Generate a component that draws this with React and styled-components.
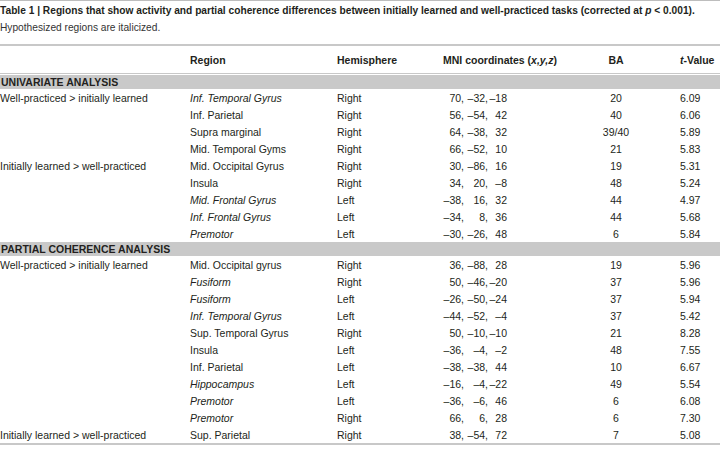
import React from "react";
import styled, { createGlobalStyle } from "styled-components";

const Global = createGlobalStyle`
  html, body { margin: 0; padding: 0; background: #fff; }
  body { font-family: "Liberation Sans", Arial, sans-serif; color: #231f20; }
`;

const Page = styled.div`
  width: 720px;
  height: 453px;
  overflow: hidden;
  border-top: 1px solid #bdbdbd;
  box-sizing: border-box;
`;

const Caption = styled.div`
  padding: 3px 0 0 0;
  height: 43px;
  box-sizing: border-box;
`;

const Title = styled.div`
  font-size: 10.2px;
  font-weight: bold;
  line-height: 13px;
  white-space: nowrap;
`;

const Sub = styled.div`
  font-size: 10.2px;
  line-height: 13px;
  margin-top: 4px;
  color: #333;
`;

const Table = styled.div`
  border-top: 2px solid #c8c8c8;
  border-bottom: 2px solid #c8c8c8;
`;

const Row = styled.div`
  display: grid;
  grid-template-columns: 190px 147px 106px 142px 62px 73px;
  align-items: center;
  height: ${(p) => (p.$head ? "27px" : "17px")};
  font-size: 10.5px;
  font-weight: ${(p) => (p.$head ? "bold" : "normal")};
  border-bottom: ${(p) => (p.$head ? "1px solid #c8c8c8" : "none")};
  margin-bottom: ${(p) => (p.$head ? "1px" : "0")};
`;

const Cell = styled.div`
  white-space: nowrap;
  font-style: ${(p) => (p.$italic ? "italic" : "normal")};
  text-align: ${(p) => p.$align || "left"};
`;

const TCell = styled(Cell)`
  padding-left: 33px;
`;

const Band = styled.div`
  background: #c9c9c9;
  height: 14px;
  line-height: 14px;
  font-size: 10.5px;
  font-weight: bold;
  padding-left: 1px;
`;

const Coords = styled.div`
  display: grid;
  grid-template-columns: 21px 24px 19px;
`;

const Num = styled.span`
  text-align: right;
  white-space: nowrap;
`;

const univariate = [
  ["Well-practiced > initially learned", "Inf. Temporal Gyrus", true, "Right", ["70", "–32", "–18"], "20", "6.09"],
  ["", "Inf. Parietal", false, "Right", ["56", "–54", "42"], "40", "6.06"],
  ["", "Supra marginal", false, "Right", ["64", "–38", "32"], "39/40", "5.89"],
  ["", "Mid. Temporal Gyms", false, "Right", ["66", "–52", "10"], "21", "5.83"],
  ["Initially learned > well-practiced", "Mid. Occipital Gyrus", false, "Right", ["30", "–86", "16"], "19", "5.31"],
  ["", "Insula", false, "Right", ["34", "20", "–8"], "48", "5.24"],
  ["", "Mid. Frontal Gyrus", true, "Left", ["–38", "16", "32"], "44", "4.97"],
  ["", "Inf. Frontal Gyrus", true, "Left", ["–34", "8", "36"], "44", "5.68"],
  ["", "Premotor", true, "Left", ["–30", "–26", "48"], "6", "5.84"],
];

const partial = [
  ["Well-practiced > initially learned", "Mid. Occipital gyrus", false, "Right", ["36", "–88", "28"], "19", "5.96"],
  ["", "Fusiform", true, "Right", ["50", "–46", "–20"], "37", "5.96"],
  ["", "Fusiform", true, "Left", ["–26", "–50", "–24"], "37", "5.94"],
  ["", "Inf. Temporal Gyrus", true, "Left", ["–44", "–52", "–4"], "37", "5.42"],
  ["", "Sup. Temporal Gyrus", false, "Right", ["50", "–10", "–10"], "21", "8.28"],
  ["", "Insula", false, "Left", ["–36", "–4", "–2"], "48", "7.55"],
  ["", "Inf. Parietal", false, "Left", ["–38", "–38", "44"], "10", "6.67"],
  ["", "Hippocampus", true, "Left", ["–16", "–4", "–22"], "49", "5.54"],
  ["", "Premotor", true, "Left", ["–36", "–6", "46"], "6", "6.08"],
  ["", "Premotor", true, "Right", ["66", "6", "28"], "6", "7.30"],
  ["Initially learned > well-practiced", "Sup. Parietal", false, "Right", ["38", "–54", "72"], "7", "5.08"],
];

function DataRow({ r }) {
  const [contrast, region, italic, hemi, xyz, ba, t] = r;
  return (
    <Row>
      <Cell>{contrast}</Cell>
      <Cell $italic={italic}>{region}</Cell>
      <Cell>{hemi}</Cell>
      <Coords>
        <Num>{xyz[0]},</Num>
        <Num>{xyz[1]},</Num>
        <Num>{xyz[2]}</Num>
      </Coords>
      <Cell $align="center">{ba}</Cell>
      <TCell>{t}</TCell>
    </Row>
  );
}

export default function App() {
  return (
    <>
      <Global />
      <Page>
        <Caption>
          <Title>
            Table 1 | Regions that show activity and partial coherence differences between initially learned and
            well-practiced tasks (corrected at <i>p</i> &lt; 0.001).
          </Title>
          <Sub>Hypothesized regions are italicized.</Sub>
        </Caption>
        <Table>
          <Row $head>
            <Cell />
            <Cell>Region</Cell>
            <Cell>Hemisphere</Cell>
            <Cell>
              MNI coordinates (<i>x,y,z</i>)
            </Cell>
            <Cell $align="center">BA</Cell>
            <TCell>
              <i>t</i>-Value
            </TCell>
          </Row>
          <Band>UNIVARIATE ANALYSIS</Band>
          {univariate.map((r, i) => (
            <DataRow key={"u" + i} r={r} />
          ))}
          <Band>PARTIAL COHERENCE ANALYSIS</Band>
          {partial.map((r, i) => (
            <DataRow key={"p" + i} r={r} />
          ))}
        </Table>
      </Page>
    </>
  );
}
